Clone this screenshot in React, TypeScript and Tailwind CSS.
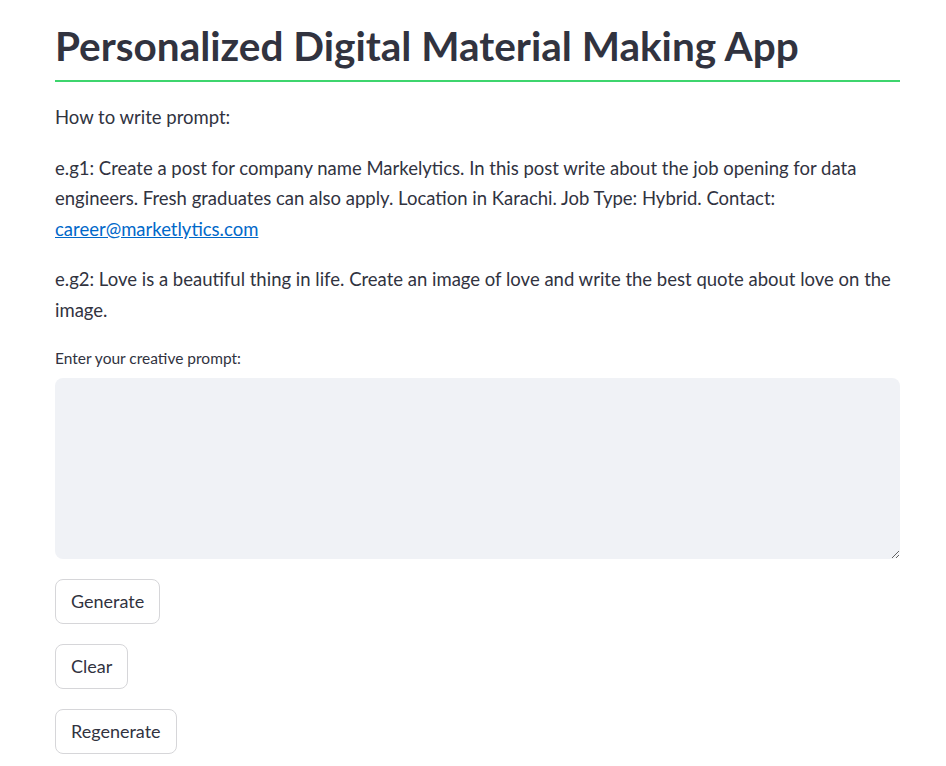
export default function App() {
  const body = "text-[#31333F] text-[18.5px] leading-[30.5px]";
  return (
    <div className="min-h-screen bg-white" style={{ fontFamily: 'Lato, "Noto Sans", sans-serif' }}>
      <div className="mx-[55px] w-[845px] pt-[18px]">
        <h1 className="text-[40.5px] font-bold leading-[56px] text-[#31333F] pb-[6px] border-b-2 border-[#3dd56d]">
          Personalized Digital Material Making App
        </h1>
        <div className={`${body} mt-[20px]`}>
          <p>How to write prompt:</p>
          <p className="mt-[20px]">
            e.g1: Create a post for company name Markelytics. In this post write about the job opening for data
            <br />
            engineers. Fresh graduates can also apply. Location in Karachi. Job Type: Hybrid. Contact:
            <br />
            <a href="#" className="text-[#0068c9] underline">career@marketlytics.com</a>
          </p>
          <p className="mt-[20px]">
            e.g2: Love is a beautiful thing in life. Create an image of love and write the best quote about love on the
            <br />
            image.
          </p>
        </div>
        <label className="block mt-[23px] text-[15.5px] leading-[20px] text-[#31333F]">Enter your creative prompt:</label>
        <textarea className="block mt-[10px] w-full h-[181px] rounded-lg bg-[#f0f2f6] outline-none resize-y" />
        <div className="mt-[20px] flex flex-col items-start gap-[20px]">
          {["Generate", "Clear", "Regenerate"].map((t) => (
            <button
              key={t}
              className="h-[45px] px-[15px] rounded-lg border border-[#d6d6d9] bg-white text-[18px] text-[#31333F]"
            >
              {t}
            </button>
          ))}
        </div>
      </div>
    </div>
  );
}
